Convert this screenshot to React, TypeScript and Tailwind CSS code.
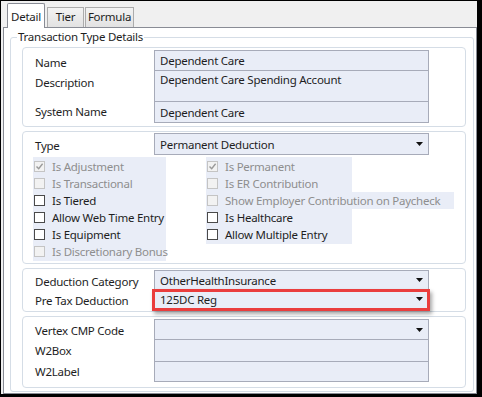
import React from "react"

const box = "border border-[#a7abb9] bg-[#e9edf7]"

function Arrow() {
  return (
    <svg width="7" height="4" viewBox="0 0 7 4" className="shrink-0">
      <polygon points="0,0 7,0 3.5,4" fill="#111" />
    </svg>
  )
}

function Select({ value, h, className = "" }: { value?: string; h: string; className?: string }) {
  return (
    <div className={`${box} ${h} w-[275px] flex items-center justify-between pl-[5px] pr-[5px] ${className}`}>
      <span className="pt-px">{value}</span>
      <Arrow />
    </div>
  )
}

function Label({ text, className = "" }: { text: string; className?: string }) {
  return <div className={`w-[119px] shrink-0 ${className}`}>{text}</div>
}

function Check({
  label,
  checked = false,
  disabled = false,
  w = "w-[133px]",
}: {
  label: string
  checked?: boolean
  disabled?: boolean
  w?: string
}) {
  return (
    <div className={`h-[17px] ${w} flex items-center bg-[#e9edf7] ${disabled ? "text-[#8e8e8e]" : ""}`}>
      <div
        className={`ml-px shrink-0 w-[11px] h-[11px] border flex items-center justify-center ${
          disabled ? "border-[#c4c4c4] bg-[#f2f2f2]" : "border-[#4a4a4a] bg-white"
        }`}
      >
        {checked && (
          <svg width="9" height="9" viewBox="0 0 9 9">
            <path d="M1.5 4.5 L3.7 6.8 L7.6 1.8" stroke="#9a9a9a" strokeWidth="1.4" fill="none" />
          </svg>
        )}
      </div>
      <span className="ml-[7px] pt-px whitespace-nowrap">{label}</span>
    </div>
  )
}

const panel = "border border-[#d5dde6] rounded-[4px] bg-white pl-[12px]"

export default function App() {
  return (
    <div className="w-[482px] h-[397px] bg-black pt-px pl-px pr-[5px] pb-[3px] font-['Noto_Sans',sans-serif] text-[11.5px] tracking-[-0.25px] leading-[16px] text-[#1e1e1e]">
      <div className="w-full h-full bg-[#f0f0f0] flex flex-col pl-[2px]">
        {/* tab strip */}
        <div className="h-[26px] flex items-end relative z-10 shrink-0">
          <div className="ml-[4px] w-[38px] h-[25px] -mb-px bg-white border border-b-0 border-[#898c95] rounded-t-[2px] flex items-start justify-center pt-[5px]">
            Detail
          </div>
          <div className="ml-[2px] w-[37px] h-[20px] bg-gradient-to-b from-[#f3f3f3] to-[#e2e2e2] border border-b-0 border-[#acacac] flex items-start justify-center pt-[1px]">
            Tier
          </div>
          <div className="ml-px w-[49px] h-[20px] bg-gradient-to-b from-[#f3f3f3] to-[#e2e2e2] border border-b-0 border-[#acacac] flex items-start justify-center pt-[1px]">
            Formula
          </div>
        </div>

        {/* tab page */}
        <div className="flex-1 bg-white border border-[#898c95] pl-[6px] pr-[2px] pt-[2px]">
          <fieldset className="border border-[#d5dde6] rounded-[3px] pl-[11px] pr-[7px] pb-[2px] h-[362px]">
            <legend className="-ml-[5px] px-[1px] leading-[14px]">Transaction Type Details</legend>

            {/* panel 1 */}
            <div className={`${panel} h-[80px] pt-[2px] mt-[3px]`}>
              <div className="flex">
                <Label text="Name" className="flex items-center pt-[4px]" />
                <div className={`${box} h-[21px] w-[275px] pl-[5px] pt-px flex items-center`}>Dependent Care</div>
              </div>
              <div className="flex -mt-px">
                <Label text="Description" className="pt-[5px]" />
                <div className={`${box} h-[32px] w-[275px] pl-[5px] pt-px`}>Dependent Care Spending Account</div>
              </div>
              <div className="flex -mt-px">
                <Label text="System Name" className="flex items-center" />
                <div className={`${box} h-[22px] w-[275px] pl-[5px] pt-px flex items-center`}>Dependent Care</div>
              </div>
            </div>

            {/* panel 2 */}
            <div className={`${panel} h-[133px] pt-px mt-[4px]`}>
              <div className="flex">
                <Label text="Type" className="flex items-center pt-[3px]" />
                <Select value="Permanent Deduction" h="h-[22px]" />
              </div>
              <div className="flex mt-[2px] -ml-[2px]">
                <div className="flex flex-col py-px bg-[#e9edf7] w-[133px]">
                  <Check label="Is Adjustment" checked disabled />
                  <Check label="Is Transactional" disabled />
                  <Check label="Is Tiered" />
                  <Check label="Allow Web Time Entry" />
                  <Check label="Is Equipment" />
                  <Check label="Is Discretionary Bonus" disabled />
                </div>
                <div className="flex flex-col py-px bg-[#e9edf7] w-[146px] ml-[40px] self-start">
                  <Check label="Is Permanent" checked disabled w="w-[146px]" />
                  <Check label="Is ER Contribution" disabled w="w-[146px]" />
                  <Check label="Show Employer Contribution on Paycheck" disabled w="w-[248px]" />
                  <Check label="Is Healthcare" w="w-[146px]" />
                  <Check label="Allow Multiple Entry" w="w-[146px]" />
                </div>
              </div>
            </div>

            {/* panel 3 */}
            <div className={`${panel} h-[44px] pt-px mt-[4px]`}>
              <div className="flex">
                <Label text="Deduction Category" className="flex items-center pt-[3px]" />
                <Select value="OtherHealthInsurance" h="h-[20px]" />
              </div>
              <div className="flex -mt-px">
                <Label text="Pre Tax Deduction" className="flex items-center pt-[3px]" />
                <div className="relative">
                  <Select value="125DC Reg" h="h-[20px]" />
                  <div className="absolute -left-[2px] top-0 w-[278px] h-[22px] border-[3px] border-[#ea3d3d] shadow-[2px_3px_4px_rgba(0,0,0,0.35)]" />
                </div>
              </div>
            </div>

            {/* panel 4 */}
            <div className={`${panel} h-[72px] pt-[2px] mt-[4px]`}>
              <div className="flex">
                <Label text="Vertex CMP Code" className="flex items-center pt-[2px]" />
                <Select h="h-[21px]" />
              </div>
              <div className="flex -mt-px">
                <Label text="W2Box" className="flex items-center pt-px" />
                <div className={`${box} h-[23px] w-[275px]`} />
              </div>
              <div className="flex -mt-px">
                <Label text="W2Label" className="flex items-center" />
                <div className={`${box} h-[21px] w-[275px]`} />
              </div>
            </div>
          </fieldset>
        </div>
      </div>
    </div>
  )
}
